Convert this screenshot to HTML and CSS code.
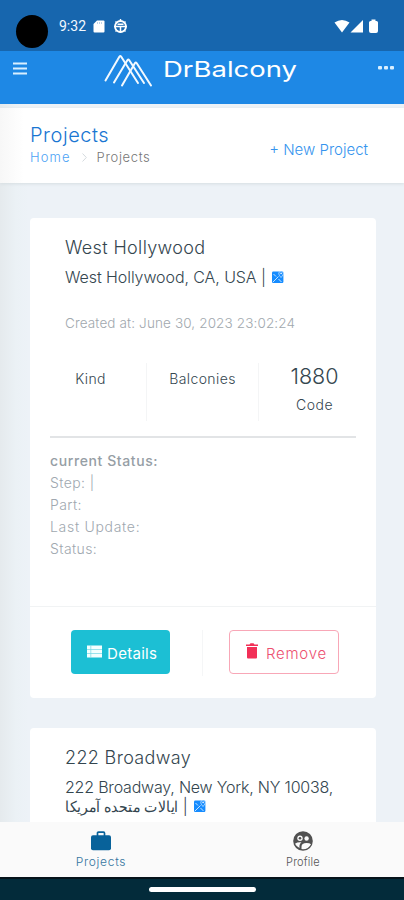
FILE: index.html
```
<!DOCTYPE html>
<html lang="en">
<head>
<meta charset="utf-8">
<meta name="viewport" content="width=device-width, initial-scale=1">
<title>DrBalcony Projects</title>
<link rel="stylesheet" href="styles.css">
</head>
<body>
<svg width="0" height="0" class="defs">
  <symbol id="map" viewBox="0 0 12 12">
    <rect x="0" y="0.6" width="11.400" height="11.400" rx="1.2" fill="#168cff"/>
    <path d="M1.500 3 4 5.500M1 11 6.500 5.500M6.500 8l3 3" stroke="#d9eeff" stroke-width=".9" fill="none"/>
    <path d="M9 6.500C7.700 4.800 6.800 3.600 6.800 2.400a2.200 2.200 0 0 1 4.600 0C11.400 3.600 10.300 4.800 9 6.500z" fill="#168cff" stroke="#e8f5ff" stroke-width=".7"/>
    <circle cx="9.100" cy="2.400" r=".8" fill="#fff"/>
  </symbol>
</svg>
<div class="phone">
  <div class="status">
    <span class="camera"></span>
    <span class="time">9:32</span>
    <svg class="sd" width="12" height="13" viewBox="0 0 12 13"><path d="M4 .5h6.500q1 0 1 1v10q0 1-1 1h-9q-1 0-1-1V4z" fill="#fff"/><path d="M4.500 2v2M6.500 2v2M8.500 2v2" stroke="#9fc0df" stroke-width=".7"/></svg>
    <svg class="globe" width="15" height="15" viewBox="0 0 15 15" fill="none" stroke="#fff"><circle cx="7.500" cy="7.500" r="5.500" stroke-width="1.800"/><path d="M1 7.500h13M7.500 8v6M4.500 5.200h6" stroke-width="1.500"/><path d="M7.500 0v2M2.500 2.500l1.500 1.500M12.500 2.500l-1.500 1.500M2.500 12.500l1.500-1.500M12.500 12.500l-1.500-1.500" stroke-width="1.400"/></svg>
    <svg class="signals" width="46" height="15" viewBox="0 0 46 15" fill="#fff"><path d="M.5 3.500Q8-1.500 15.500 3.500L8 13.500z"/><path d="M16.500 13.500 29 1v12.500z"/><path d="M37.500.5h4V2h1q1.500 0 1.500 1.500V12q0 2-2 2h-5q-2 0-2-2V3.500Q35 2 36.500 2h1z"/></svg>
  </div>
  <header class="topbar">
    <svg class="burger" width="14" height="13" viewBox="0 0 14 13"><path d="M0 1.500h14M0 6.500h14M0 11.500h14" stroke="#d9efff" stroke-width="2.200"/></svg>
    <svg class="logo" width="194" height="36" viewBox="0 0 194 36">
      <g fill="none" stroke="#f2f9ff" stroke-width="2" stroke-linecap="round" stroke-linejoin="round">
        <path d="M1.500 28.500 15.500 4.500q.8-1 1.600 0L34 31"/><path d="M10 30.500 23.500 8q.8-1 1.600 0L40 31"/><path d="M18 33.500 31 11q.8-1 1.600 0L47 33.500"/>
      </g>
      <text x="59" y="24.500" textLength="134" lengthAdjust="spacingAndGlyphs" class="wordmark">DrBalcony</text>
    </svg>
    <svg class="more" width="16" height="4" viewBox="0 0 16 4" fill="#d9efff"><rect width="4" height="3.500" rx="1"/><rect x="6" width="4" height="3.500" rx="1"/><rect x="12" width="4" height="3.500" rx="1"/></svg>
  </header>
  <main class="content">
    <section class="subheader">
      <div>
        <h1>Projects</h1>
        <nav class="crumbs"><a>Home</a><svg width="5" height="9" viewBox="0 0 5 9"><path d="M.5.5 4.300 4.500.5 8.500" fill="none" stroke="#d4dade"/></svg><span>Projects</span></nav>
      </div>
      <a class="new">+ New Project</a>
    </section>
    <article class="card">
      <div class="info">
        <h2>West Hollywood</h2>
        <p class="address">West Hollywood, CA, USA | <svg class="map"><use href="#map"/></svg></p>
        <p class="created">Created at: June 30, 2023 23:02:24</p>
      </div>
      <div class="stats">
        <div class="kind">Kind</div>
        <div class="balconies">Balconies</div>
        <div class="code"><strong>1880</strong><span>Code</span></div>
      </div>
      <div class="progress">
        <p class="current">current Status:</p>
        <p>Step: |</p>
        <p>Part:</p>
        <p class="update">Last Update:</p>
        <p>Status:</p>
      </div>
      <div class="actions">
        <div><a class="btn details"><svg width="15" height="13" viewBox="0 0 15 13"><path d="M0 .5h15v12H0z" fill="#f3ffff"/><path d="M3.800.5v12M0 4.500h15M0 8.500h15" stroke="#72d7e4" stroke-width=".7"/></svg>Details</a></div>
        <div><a class="btn remove"><svg width="12" height="16" viewBox="0 0 12 16" fill="#f22f57"><path d="M0 1.500h3.500L4.500.3h3l1 1.200H12V3H0z"/><path d="M1 4h10v10.500q0 1-1 1H2q-1 0-1-1z"/></svg>Remove</a></div>
      </div>
    </article>
    <article class="card next">
      <div class="info">
        <h2 class="broadway">222 Broadway</h2>
        <p class="address two">222 Broadway, New York, NY 10038,</p>
        <p class="address country"><span dir="rtl" lang="fa">ایالات متحده آمریکا</span> | <svg class="map"><use href="#map"/></svg></p>
      </div>
    </article>
  </main>
  <nav class="tabs">
    <a class="tab active"><svg width="20" height="20" viewBox="0 0 20 20"><path d="M6.500 5V2.200q0-1 1-1h5q1 0 1 1V5" fill="none" stroke="#08629a" stroke-width="1.700"/><rect y="4.300" width="20" height="15" rx="2" fill="#08629a"/></svg><span>Projects</span></a>
    <a class="tab"><svg width="20" height="20" viewBox="0 0 20 20"><circle cx="10" cy="10" r="9.800" fill="#505050"/><g fill="#fafafa"><circle cx="7" cy="7.200" r="2.700"/><circle cx="13.600" cy="7.500" r="2.200"/><path d="M2 12.800Q4.500 11 8.500 11.400 6 12.500 6.500 17 3.500 15.800 2 12.800zM8.500 18v-2.300q0-3.700 5-3.700 3.200 0 4.500 1.200Q15.500 18 10 18.300z"/></g><circle cx="7" cy="7.200" r="1.300" fill="#505050"/></svg><span>Profile</span></a>
  </nav>
  <div class="gesture"><span></span></div>
</div>
</body>
</html>
```
FILE: styles.css
```
* { box-sizing: border-box; }
body, h1, h2, p { margin: 0; font-weight: 300; }
body { font-family: Inter, "Noto Sans", sans-serif; color: #34464f; }
svg { flex: none; }
.defs { position: absolute; }
.phone { width: 404px; height: 900px; display: flex; flex-direction: column; overflow: hidden; background: #ecf2f7; }

.status { height: 51px; flex: none; display: flex; align-items: center; padding: 1px 24px 0 16px; background: #1766ae; }
.camera { width: 32px; height: 33px; border-radius: 50%; background: #000; margin-top: 11px; }
.time { margin-left: 11px; width: 34px; font: 400 14px/16px Roboto, sans-serif; color: #f2f8ff; }
.sd { margin-left: 0; }
.globe { margin-left: 8px; }
.signals { margin-left: auto; }

.topbar { height: 53px; flex: none; display: flex; align-items: flex-start; padding: 0 10px 0 13px; background: #1e88e5; }
.burger { margin-top: 11px; }
.logo { margin: 1px 0 0 77px; }
.wordmark { font: 400 22px Inter, sans-serif; fill: #fff; }
.more { margin: 15px 0 0 auto; }

.content { flex: 1; min-height: 0; overflow: hidden; padding-top: 4px; background: linear-gradient(90deg, #e5eaed 0, #ebf1f5 16px, #edf2f7 28px); }
.subheader { height: 75px; display: flex; justify-content: space-between; padding: 14px 36px 0 30px; background: linear-gradient(90deg, #f7f7f7, #fff 24px); box-shadow: 0 1px 3px #d5dde1; margin-bottom: 35px; }
h1 { font-size: 20px; line-height: 26px; letter-spacing: .55px; color: #1976d2; }
.crumbs { display: flex; align-items: center; font-size: 13px; line-height: 19px; color: #777; }
.crumbs a { color: #4da3f5; letter-spacing: 1.1px; }
.crumbs svg { margin: 0 10px 0 11px; }
.crumbs span { letter-spacing: .65px; }
.new { margin-top: 18px; font-size: 15px; line-height: 20px; color: #3594ee; }

.card { width: 346px; margin: 0 0 30px 30px; border-radius: 4px; background: #fff; }
.next { height: 480px; }
.info { padding: 17px 35px 0; white-space: nowrap; }
h2 { font-size: 18px; line-height: 26px; letter-spacing: .35px; }
.address { margin-top: 4px; font-size: 16px; line-height: 24px; letter-spacing: -.08px; }
.map { width: 12px; height: 12px; margin-left: 2px; }
.created { margin-top: 23px; font-size: 13.5px; line-height: 22px; letter-spacing: .13px; color: #a1a8ae; }

.stats { display: grid; grid-template-columns: 97px 112px 97px; height: 86px; margin: 18px 20px 0; padding: 11px 0 16px; border-bottom: 2px solid #e2e4e6; text-align: center; font-size: 14px; }
.stats > div { height: 58px; line-height: 32px; }
.kind { padding-right: 15px; letter-spacing: .3px; }
.kind, .balconies { border-right: 1px solid #f4f5f6; }
.balconies { letter-spacing: .4px; }
.stats .code { display: flex; flex-direction: column; padding-left: 14px; }
.code strong { font-size: 21.5px; font-weight: 300; line-height: 26px; }
.code span { line-height: 31px; letter-spacing: .5px; }

.progress { height: 168px; padding: 12px 20px 0; font-size: 14px; line-height: 22px; letter-spacing: .4px; color: #a0a8af; }
.current { font-weight: 500; letter-spacing: .6px; color: #969ea5; }
.update { letter-spacing: .7px; }
.actions { height: 92px; display: grid; grid-template-columns: 1fr 1fr; align-items: center; border-top: 1px solid #f1f3f4; }
.actions div { height: 46px; }
.actions div:first-child { padding-left: 41px; border-right: 1px solid #f5f6f7; }
.actions div:last-child { padding-left: 26px; }
.btn { display: flex; width: 99px; height: 44px; align-items: center; padding: 3px 0 0 16px; border-radius: 4px; font-size: 15px; letter-spacing: .3px; }
.btn svg { margin: -4px 5px 0 0; }
.details { color: #fff; background: #1cbfd4; font-weight: 400; }
.remove { width: 110px; border: 1px solid #f8a7b7; color: #ed4f70; letter-spacing: .75px; }
.remove svg { margin-right: 8px; }
.address.two { letter-spacing: -.2px; }
.address.country { margin-top: -5px; }
.country span { font-size: 15px; letter-spacing: 0; display: inline-block; transform: scaleX(.94); transform-origin: left; margin-right: -7px; }

.tabs { height: 55px; flex: none; display: grid; grid-template-columns: 1fr 1fr; background: #fafafa; }
.tab { display: flex; flex-direction: column; align-items: center; padding-top: 9px; font-size: 11px; line-height: 18px; color: #555; letter-spacing: .2px; }
.tab svg { margin-bottom: 2px; }
.active { font-size: 12px; letter-spacing: .7px; color: #35759f; }
.gesture { height: 23px; flex: none; display: flex; justify-content: center; padding-top: 8px; border-top: 2px solid #06131a; background: #032b3a; }
.gesture span { width: 107px; height: 5px; border-radius: 3px; background: #fff; }
```
